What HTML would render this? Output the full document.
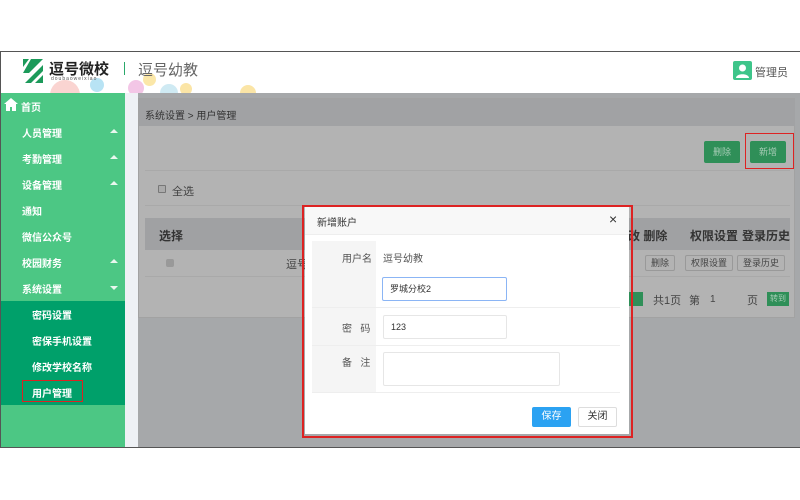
<!DOCTYPE html>
<html><head><meta charset="utf-8"><style>
*{margin:0;padding:0;box-sizing:border-box}
body{width:800px;height:500px;background:#fff;font-family:"Liberation Sans","Noto Sans CJK SC",sans-serif;position:relative;overflow:hidden;font-size:11px;color:#333}
.a{position:absolute}
.side{left:1px;top:93px;width:124px;height:354px;background:#4cc784;color:#fff;font-weight:bold;font-size:10px}
.side .it{position:absolute;left:21px}
.side .tri{position:absolute;left:109px;width:0;height:0;border-left:4px solid transparent;border-right:4px solid transparent}
.up{border-bottom:4px solid #e8f7ee}
.dn{border-top:4px solid #e8f7ee}
.t{position:absolute;white-space:nowrap}
</style></head><body>
<div class="a" style="left:0;top:51px;width:800px;height:1px;background:#555"></div>
<div class="a" style="left:0;top:51px;width:1px;height:397px;background:#555"></div>
<div class="a" style="left:0;top:447px;width:800px;height:1px;background:#555"></div>
<div class="a" style="left:1px;top:52px;width:799px;height:41px;background:#fff"></div>
<div class="a" style="left:50px;top:80px;width:30px;height:30px;border-radius:50%;background:#f6b7b2;opacity:.6"></div>
<div class="a" style="left:90px;top:78px;width:14px;height:14px;border-radius:50%;background:#b8e3f4"></div>
<div class="a" style="left:128px;top:80px;width:16px;height:16px;border-radius:50%;background:#f3c6e6"></div>
<div class="a" style="left:143px;top:73px;width:13px;height:13px;border-radius:50%;background:#fbe7a8"></div>
<div class="a" style="left:160px;top:84px;width:18px;height:18px;border-radius:50%;background:#cfeaf3"></div>
<div class="a" style="left:180px;top:83px;width:12px;height:12px;border-radius:50%;background:#fbe5a6"></div>
<div class="a" style="left:240px;top:85px;width:16px;height:16px;border-radius:50%;background:#fbe5a6"></div>
<svg class="a" style="left:21px;top:57px" width="24" height="26" viewBox="0 0 24 26"><path d="M2 2h6l-6 8z M10 2h12l-14 14h-6z M22 8v6l-12 12h-6z M22 18v8h-8z" fill="#1c9a5a"/></svg>
<div class="t" style="left:49px;top:58px;font-size:15px;font-weight:bold;color:#222">逗号微校</div>
<div class="t" style="left:51px;top:76px;font-size:5px;color:#555;letter-spacing:1px">doubaoweixiao</div>
<div class="a" style="left:124px;top:62px;width:1px;height:13px;background:#2aa86a"></div>
<div class="t" style="left:138px;top:59px;font-size:15px;color:#666">逗号幼教</div>
<div class="a" style="left:733px;top:61px;width:19px;height:19px;background:#3ec58a;border-radius:2px"></div>
<svg class="a" style="left:733px;top:61px" width="19" height="19"><circle cx="9.5" cy="7" r="3.5" fill="#fff"/><path d="M3 17c0-5 13-5 13 0z" fill="#fff"/></svg>
<div class="t" style="left:755px;top:64px;font-size:11px;color:#555">管理员</div>

<div class="a side">
<svg style="position:absolute;left:3px;top:5px" width="14" height="13" viewBox="0 0 14 13"><path d="M7 0L0 6h2v7h4V9h2v4h4V6h2z" fill="#fff"/></svg>
<div class="t" style="left:20px;top:6px">首页</div>
<div class="it" style="top:32px">人员管理</div><div class="tri up" style="top:36px"></div>
<div class="it" style="top:58px">考勤管理</div><div class="tri up" style="top:62px"></div>
<div class="it" style="top:84px">设备管理</div><div class="tri up" style="top:88px"></div>
<div class="it" style="top:110px">通知</div>
<div class="it" style="top:136px">微信公众号</div>
<div class="it" style="top:162px">校园财务</div><div class="tri up" style="top:166px"></div>
<div class="it" style="top:188px">系统设置</div><div class="tri dn" style="top:193px"></div>
<div style="position:absolute;left:0;top:208px;width:124px;height:104px;background:#00a06a"></div>
<div class="it" style="left:31px;top:214px">密码设置</div>
<div class="it" style="left:31px;top:240px">密保手机设置</div>
<div class="it" style="left:31px;top:266px">修改学校名称</div>
<div class="it" style="left:31px;top:292px">用户管理</div>
<div style="position:absolute;left:21px;top:287px;width:61px;height:22px;border:1.5px solid #d22"></div>
</div>

<div class="a" style="left:125px;top:93px;width:675px;height:354px;background:#eef1f5"></div>
<div class="a" style="left:138px;top:93px;width:662px;height:354px;background:#a6a8aa"></div>
<div class="a" style="left:138px;top:98px;width:657px;height:220px;background:#b3b3b3;border:1px solid #a2a2a2"></div>
<div class="a" style="left:139px;top:99px;width:656px;height:27px;background:#a1a2a4"></div>
<div class="t" style="left:145px;top:107px;font-size:10px;color:#333">系统设置 &gt; 用户管理</div>
<div class="a" style="left:704px;top:141px;width:36px;height:22px;background:#2f8f58;border-radius:2px;color:#a8cdb7;font-size:9px;text-align:center;line-height:22px">删除</div>
<div class="a" style="left:750px;top:141px;width:36px;height:22px;background:#2f8f58;border-radius:2px;color:#a8cdb7;font-size:9px;text-align:center;line-height:22px">新增</div>
<div class="a" style="left:745px;top:133px;width:49px;height:36px;border:1.5px solid #d22"></div>
<div class="a" style="left:145px;top:170px;width:645px;height:1px;background:#a9a9a9"></div>
<div class="a" style="left:158px;top:185px;width:8px;height:8px;border:1px solid #777;background:#aaa;border-radius:1px"></div>
<div class="t" style="left:172px;top:183px;font-size:11px;color:#444">全选</div>
<div class="a" style="left:145px;top:205px;width:645px;height:1px;background:#a9a9a9"></div>
<div class="a" style="left:145px;top:218px;width:645px;height:32px;background:#a0a1a3"></div>
<div class="t" style="left:159px;top:227px;font-size:12px;font-weight:bold;color:#333">选择</div>
<div class="t" style="left:628px;top:227px;font-size:12px;font-weight:bold;color:#333">改 删除</div>
<div class="t" style="left:690px;top:227px;font-size:12px;font-weight:bold;color:#333">权限设置</div>
<div class="t" style="left:742px;top:227px;font-size:12px;font-weight:bold;color:#333">登录历史</div>
<div class="a" style="left:166px;top:259px;width:8px;height:8px;background:#999;border-radius:2px"></div>
<div class="t" style="left:286px;top:256px;font-size:11px;color:#444">逗号</div>
<div class="a" style="left:645px;top:255px;width:30px;height:16px;border:1px solid #999;border-radius:2px;font-size:9px;text-align:center;line-height:14px;color:#444">删除</div>
<div class="a" style="left:685px;top:255px;width:48px;height:16px;border:1px solid #999;border-radius:2px;font-size:9px;text-align:center;line-height:14px;color:#444">权限设置</div>
<div class="a" style="left:737px;top:255px;width:48px;height:16px;border:1px solid #999;border-radius:2px;font-size:9px;text-align:center;line-height:14px;color:#444">登录历史</div>
<div class="a" style="left:145px;top:276px;width:645px;height:1px;background:#a9a9a9"></div>
<div class="a" style="left:628px;top:292px;width:15px;height:14px;background:#2f8f58"></div>
<div class="t" style="left:653px;top:292px;font-size:11px;color:#444">共1页</div>
<div class="t" style="left:689px;top:292px;font-size:11px;color:#444">第</div>
<div class="t" style="left:710px;top:294px;font-size:10px;color:#444">1</div>
<div class="t" style="left:747px;top:292px;font-size:11px;color:#444">页</div>
<div class="a" style="left:767px;top:292px;width:22px;height:14px;background:#2f8f58;color:#a8cdb7;font-size:8px;text-align:center;line-height:14px">转到</div>

<div class="a" style="left:302px;top:205px;width:331px;height:233px;border:2px solid #d22"></div>
<div class="a" style="left:305px;top:207px;width:324px;height:227px;background:#fff"></div>
<div class="a" style="left:305px;top:207px;width:324px;height:28px;background:#f8f8f8;border-bottom:1px solid #eee"></div>
<div class="t" style="left:317px;top:214px;font-size:10px;color:#333">新增账户</div>
<div class="t" style="left:609px;top:211px;font-size:14px;color:#333">×</div>
<div class="a" style="left:312px;top:241px;width:64px;height:151px;background:#f5f5f5"></div>
<div class="a" style="left:312px;top:307px;width:308px;height:1px;background:#eee"></div>
<div class="a" style="left:312px;top:345px;width:308px;height:1px;background:#eee"></div>
<div class="a" style="left:312px;top:392px;width:308px;height:1px;background:#eee"></div>
<div class="t" style="left:342px;top:250px;font-size:10px;color:#555">用户名</div>
<div class="t" style="left:383px;top:250px;font-size:10px;color:#555">逗号幼教</div>
<div class="a" style="left:382px;top:277px;width:125px;height:24px;border:1px solid #8bb5f5;border-radius:2px;font-size:9px;line-height:22px;padding-left:7px;color:#333">罗城分校2</div>
<div class="t" style="left:342px;top:320px;font-size:10px;color:#555">密&nbsp;&nbsp;&nbsp;码</div>
<div class="a" style="left:383px;top:315px;width:124px;height:24px;border:1px solid #e6e6e6;border-radius:2px;font-size:9px;line-height:22px;padding-left:7px;color:#333">123</div>
<div class="t" style="left:342px;top:354px;font-size:10px;color:#555">备&nbsp;&nbsp;&nbsp;注</div>
<div class="a" style="left:383px;top:352px;width:177px;height:34px;border:1px solid #e6e6e6;border-radius:2px"></div>
<div class="a" style="left:532px;top:407px;width:39px;height:20px;background:#2ba2f2;border-radius:2px;color:#fff;font-size:10px;text-align:center;line-height:20px">保存</div>
<div class="a" style="left:578px;top:407px;width:39px;height:20px;border:1px solid #ddd;border-radius:2px;color:#333;font-size:10px;text-align:center;line-height:18px">关闭</div>
</body></html>
